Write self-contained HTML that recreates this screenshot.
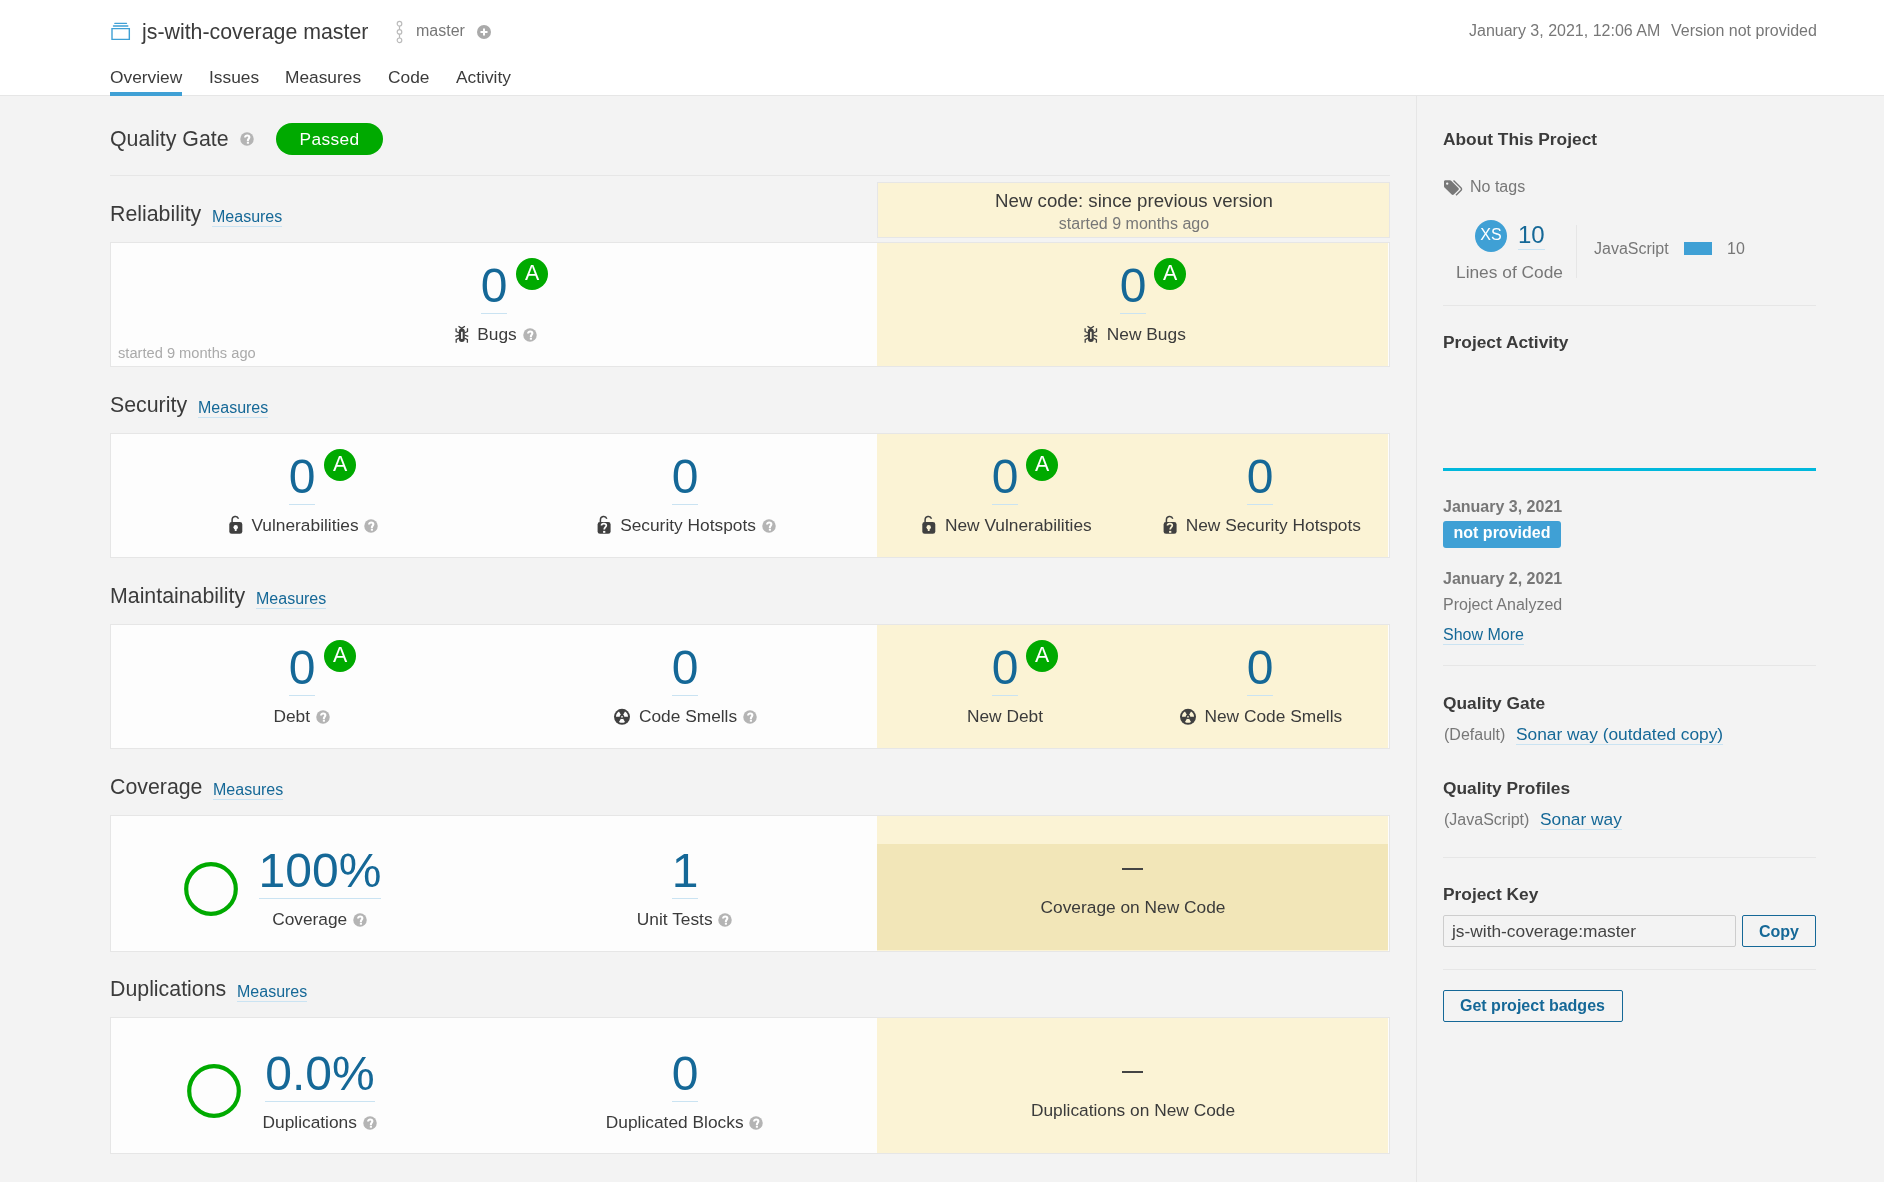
<!DOCTYPE html>
<html><head><meta charset="utf-8"><title>js-with-coverage master</title><style>
*{box-sizing:border-box;margin:0;padding:0}
html,body{width:1884px;height:1182px;overflow:hidden}
body{font-family:"Liberation Sans",sans-serif;background:#f3f3f3;color:#3b3b3b;position:relative}
.a{position:absolute;white-space:nowrap;line-height:1;will-change:transform}
.u{border-bottom:1px solid #cae3f2;padding-bottom:1px}
.rt{width:32px;height:32px;border-radius:50%;background:#00aa00;color:#fff;font-size:21.33px;line-height:30px;text-align:center}
</style></head><body>
<div class="a" style="left:0px;top:0px;width:1884px;height:95px;background:#fff"></div>
<div class="a" style="left:0px;top:95px;width:1884px;height:1px;background:#e6e6e6"></div>
<svg class="a" style="left:109.7px;top:19.8px" width="21.33" height="21.33" viewBox="0 0 16 16"><path d="M1.5 6.5h13v8h-13z" fill="none" stroke="#3fa0d5" stroke-width="1.05"/><path d="M2.6 4.5h10.8M3.6 2.5h8.8" stroke="#3fa0d5" stroke-width="1" stroke-linecap="round" fill="none"/></svg>
<div class="a" style="left:142px;top:22px;font-size:21.33px;color:#3b3b3b;font-weight:400;">js-with-coverage master</div>
<svg class="a" style="left:395px;top:20px" width="9" height="24" viewBox="0 0 9 24"><g fill="none" stroke="#bbb" stroke-width="1.2"><circle cx="4.5" cy="3.7" r="2.3"/><circle cx="4.5" cy="11.9" r="2.3"/><circle cx="4.5" cy="20.3" r="2.3"/><path d="M4.5 6v3.6M4.5 14.2v3.8"/></g></svg>
<div class="a" style="left:416px;top:23px;font-size:16px;color:#777;font-weight:400;">master</div>
<svg class="a" style="left:477px;top:25px" width="14" height="14" viewBox="0 0 14 14"><circle cx="7" cy="7" r="7" fill="#aaa"/><path d="M7 3.5v7M3.5 7h7" stroke="#fff" stroke-width="2"/></svg>
<div class="a" style="left:1468.5px;top:23.1px;font-size:16px;color:#777;font-weight:400;">January 3, 2021, 12:06 AM</div>
<div class="a" style="left:1670.5px;top:23.1px;font-size:16px;color:#777;font-weight:400;">Version not provided</div>
<div class="a" style="left:110px;top:69px;font-size:17.33px;color:#3b3b3b;font-weight:400;">Overview</div>
<div class="a" style="left:209px;top:69px;font-size:17.33px;color:#3b3b3b;font-weight:400;">Issues</div>
<div class="a" style="left:285px;top:69px;font-size:17.33px;color:#3b3b3b;font-weight:400;">Measures</div>
<div class="a" style="left:388px;top:69px;font-size:17.33px;color:#3b3b3b;font-weight:400;">Code</div>
<div class="a" style="left:456px;top:69px;font-size:17.33px;color:#3b3b3b;font-weight:400;">Activity</div>
<div class="a" style="left:110px;top:92px;width:72px;height:4px;background:#3fa0d5"></div>
<div class="a" style="left:1416px;top:96px;width:1px;height:1086px;background:#e6e6e6"></div>
<div class="a" style="left:110px;top:128.5px;font-size:21.33px;color:#3b3b3b;font-weight:400;">Quality Gate</div>
<div class="a" style="left:240px;top:132px;width:14px;height:14px"><svg width="14" height="14" viewBox="0 0 14 14" style="display:block"><circle cx="7" cy="7" r="6.75" fill="#b4b4b4"/><path d="M5.1 5.5C5.1 4.2 6 3.55 7.2 3.55 8.5 3.55 9.35 4.3 9.35 5.35 9.35 6.7 7.9 6.9 7.9 8.4V9.3" stroke="#fff" stroke-width="2.1" fill="none"/><rect x="6.85" y="9.9" width="2.1" height="1.8" fill="#fff"/></svg></div>
<div class="a" style="left:276px;top:123px;width:107px;height:32px;border-radius:16px;background:#00aa00;color:#fff;font-size:17.33px;line-height:32px;text-align:center;letter-spacing:0.35px">Passed</div>
<div class="a" style="left:110px;top:175px;width:1280px;height:1px;background:#e6e6e6"></div>
<div class="a" style="left:877px;top:182px;width:513px;height:56px;background:#fbf3d5;border:1px solid #e6e6e6"></div>
<div class="a" style="left:733.5999999999999px;width:800px;text-align:center;top:192px;font-size:18.67px;color:#3b3b3b;font-weight:400;">New code: since previous version</div>
<div class="a" style="left:733.7px;width:800px;text-align:center;top:215.7px;font-size:16px;color:#777;font-weight:400;">started 9 months ago</div>
<div class="a" style="left:110px;top:204px;font-size:21.33px;color:#3b3b3b;font-weight:400;">Reliability</div>
<div class="a" style="left:211.5px;top:208.65px;font-size:16px;color:#156897"><span class="u">Measures</span></div>
<div class="a" style="left:110px;top:242px;width:1280px;height:125px;background:#fdfdfd;border:1px solid #e6e6e6"></div>
<div class="a" style="left:877px;top:243px;width:511px;height:123px;background:#fbf3d5"></div>
<div class="a" style="left:118px;top:346px;font-size:14.67px;color:#aaa;font-weight:400;">started 9 months ago</div>
<div class="a" style="left:194px;width:600px;top:262px;text-align:center;font-size:48px;color:#156897"><span class="u">0</span></div>
<div class="a rt" style="left:516px;top:258px">A</div>
<div class="a" style="left:194px;width:600px;top:326px;height:17.33px;font-size:17.33px;color:#3b3b3b;display:flex;justify-content:center"><span style="display:inline-block;width:21.33px;height:17.33px;margin-right:5.33px;position:relative"><span style="position:absolute;left:0px;top:-2px"><svg width="21.33" height="21.33" viewBox="0 0 21.33 21.33" style="display:block"><mask id="mk1" maskUnits="userSpaceOnUse" x="0" y="0" width="21.33" height="21.33"><rect x="-2" y="-2" width="26" height="26" fill="#fff"/><rect x="10.05" y="7.8" width="1.6" height="7.1" fill="#000"/></mask><g mask="url(#mk1)"><g transform="translate(-1.5 0)"><g stroke="#404040" stroke-width="1.3" fill="none" stroke-linejoin="round"><path d="M9.0 2.2L12.2 4.4L15.4 2.2"/><path d="M9.8 9L6.6 7.5V4.2M14.8 9L18 7.5V4.2"/><path d="M9.6 11.1L5.8 12.3M15 11.1L18.8 12.3"/><path d="M9.8 14L6.7 15.6V18.8M14.8 14L17.9 15.6V18.8"/></g><rect x="9.4" y="4.5" width="5.9" height="13.4" rx="2.9" fill="#404040"/></g></g></svg></span></span><span>Bugs</span><span style="display:inline-block;width:14px;height:17.33px;margin-left:5.8px;margin-right:0.8px;position:relative"><span style="position:absolute;left:0;top:1.67px"><svg width="14" height="14" viewBox="0 0 14 14" style="display:block"><circle cx="7" cy="7" r="6.75" fill="#b4b4b4"/><path d="M5.1 5.5C5.1 4.2 6 3.55 7.2 3.55 8.5 3.55 9.35 4.3 9.35 5.35 9.35 6.7 7.9 6.9 7.9 8.4V9.3" stroke="#fff" stroke-width="2.1" fill="none"/><rect x="6.85" y="9.9" width="2.1" height="1.8" fill="#fff"/></svg></span></span></div>
<div class="a" style="left:833px;width:600px;top:262px;text-align:center;font-size:48px;color:#156897"><span class="u">0</span></div>
<div class="a rt" style="left:1154px;top:258px">A</div>
<div class="a" style="left:833px;width:600px;top:326px;height:17.33px;font-size:17.33px;color:#3b3b3b;display:flex;justify-content:center"><span style="display:inline-block;width:21.33px;height:17.33px;margin-right:5.33px;position:relative"><span style="position:absolute;left:0px;top:-2px"><svg width="21.33" height="21.33" viewBox="0 0 21.33 21.33" style="display:block"><mask id="mk2" maskUnits="userSpaceOnUse" x="0" y="0" width="21.33" height="21.33"><rect x="-2" y="-2" width="26" height="26" fill="#fff"/><rect x="10.05" y="7.8" width="1.6" height="7.1" fill="#000"/></mask><g mask="url(#mk2)"><g transform="translate(-1.5 0)"><g stroke="#404040" stroke-width="1.3" fill="none" stroke-linejoin="round"><path d="M9.0 2.2L12.2 4.4L15.4 2.2"/><path d="M9.8 9L6.6 7.5V4.2M14.8 9L18 7.5V4.2"/><path d="M9.6 11.1L5.8 12.3M15 11.1L18.8 12.3"/><path d="M9.8 14L6.7 15.6V18.8M14.8 14L17.9 15.6V18.8"/></g><rect x="9.4" y="4.5" width="5.9" height="13.4" rx="2.9" fill="#404040"/></g></g></svg></span></span><span>New Bugs</span></div>
<div class="a" style="left:110px;top:395px;font-size:21.33px;color:#3b3b3b;font-weight:400;">Security</div>
<div class="a" style="left:197.5px;top:399.65px;font-size:16px;color:#156897"><span class="u">Measures</span></div>
<div class="a" style="left:110px;top:433px;width:1280px;height:125px;background:#fdfdfd;border:1px solid #e6e6e6"></div>
<div class="a" style="left:877px;top:434px;width:511px;height:123px;background:#fbf3d5"></div>
<div class="a" style="left:2px;width:600px;top:453px;text-align:center;font-size:48px;color:#156897"><span class="u">0</span></div>
<div class="a rt" style="left:324px;top:449px">A</div>
<div class="a" style="left:2px;width:600px;top:517px;height:17.33px;font-size:17.33px;color:#3b3b3b;display:flex;justify-content:center"><span style="display:inline-block;width:21.33px;height:17.33px;margin-right:5.33px;position:relative"><span style="position:absolute;left:0px;top:-2px"><svg width="21.33" height="21.33" viewBox="0 0 21.33 21.33" style="display:block"><mask id="mk3" maskUnits="userSpaceOnUse" x="0" y="0" width="21.33" height="21.33"><rect x="-2" y="-2" width="26" height="26" fill="#fff"/><circle cx="10.70" cy="12.2" r="2.2" fill="#000"/><path d="M10.70 12.5V16" stroke="#000" stroke-width="1.8"/></mask><g mask="url(#mk3)"><path d="M7.10 7.6V4.85A3.3 3.3 0 0 1 13.50 3.72" stroke="#404040" stroke-width="1.5" fill="none"/><rect x="4.3" y="7.05" width="13" height="11.8" rx="2.4" fill="#404040"/></g></svg></span></span><span>Vulnerabilities</span><span style="display:inline-block;width:14px;height:17.33px;margin-left:5.8px;margin-right:0.8px;position:relative"><span style="position:absolute;left:0;top:1.67px"><svg width="14" height="14" viewBox="0 0 14 14" style="display:block"><circle cx="7" cy="7" r="6.75" fill="#b4b4b4"/><path d="M5.1 5.5C5.1 4.2 6 3.55 7.2 3.55 8.5 3.55 9.35 4.3 9.35 5.35 9.35 6.7 7.9 6.9 7.9 8.4V9.3" stroke="#fff" stroke-width="2.1" fill="none"/><rect x="6.85" y="9.9" width="2.1" height="1.8" fill="#fff"/></svg></span></span></div>
<div class="a" style="left:385px;width:600px;top:453px;text-align:center;font-size:48px;color:#156897"><span class="u">0</span></div>
<div class="a" style="left:385px;width:600px;top:517px;height:17.33px;font-size:17.33px;color:#3b3b3b;display:flex;justify-content:center"><span style="display:inline-block;width:21.33px;height:17.33px;margin-right:5.33px;position:relative"><span style="position:absolute;left:0px;top:-2px"><svg width="21.33" height="21.33" viewBox="0 0 21.33 21.33" style="display:block"><mask id="mk4" maskUnits="userSpaceOnUse" x="0" y="0" width="21.33" height="21.33"><rect x="-2" y="-2" width="26" height="26" fill="#fff"/><path d="M8.50 10.4C8.50 9.3 9.50 8.6 10.90 8.6 12.30 8.6 13.30 9.3 13.30 10.5 13.30 11.9 11.20 12.6 11.20 14.6" stroke="#000" stroke-width="1.7" fill="none"/><rect x="10.10" y="15.9" width="2.2" height="1.9" fill="#000"/></mask><g mask="url(#mk4)"><path d="M7.40 7.6V4.85A3.3 3.3 0 0 1 13.80 3.72" stroke="#404040" stroke-width="1.5" fill="none"/><rect x="4.6" y="7.05" width="13" height="11.8" rx="2.4" fill="#404040"/></g></svg></span></span><span>Security Hotspots</span><span style="display:inline-block;width:14px;height:17.33px;margin-left:5.8px;margin-right:0.8px;position:relative"><span style="position:absolute;left:0;top:1.67px"><svg width="14" height="14" viewBox="0 0 14 14" style="display:block"><circle cx="7" cy="7" r="6.75" fill="#b4b4b4"/><path d="M5.1 5.5C5.1 4.2 6 3.55 7.2 3.55 8.5 3.55 9.35 4.3 9.35 5.35 9.35 6.7 7.9 6.9 7.9 8.4V9.3" stroke="#fff" stroke-width="2.1" fill="none"/><rect x="6.85" y="9.9" width="2.1" height="1.8" fill="#fff"/></svg></span></span></div>
<div class="a" style="left:705px;width:600px;top:453px;text-align:center;font-size:48px;color:#156897"><span class="u">0</span></div>
<div class="a rt" style="left:1026px;top:449px">A</div>
<div class="a" style="left:705px;width:600px;top:517px;height:17.33px;font-size:17.33px;color:#3b3b3b;display:flex;justify-content:center"><span style="display:inline-block;width:21.33px;height:17.33px;margin-right:5.33px;position:relative"><span style="position:absolute;left:0px;top:-2px"><svg width="21.33" height="21.33" viewBox="0 0 21.33 21.33" style="display:block"><mask id="mk5" maskUnits="userSpaceOnUse" x="0" y="0" width="21.33" height="21.33"><rect x="-2" y="-2" width="26" height="26" fill="#fff"/><circle cx="10.70" cy="12.2" r="2.2" fill="#000"/><path d="M10.70 12.5V16" stroke="#000" stroke-width="1.8"/></mask><g mask="url(#mk5)"><path d="M7.10 7.6V4.85A3.3 3.3 0 0 1 13.50 3.72" stroke="#404040" stroke-width="1.5" fill="none"/><rect x="4.3" y="7.05" width="13" height="11.8" rx="2.4" fill="#404040"/></g></svg></span></span><span>New Vulnerabilities</span></div>
<div class="a" style="left:960px;width:600px;top:453px;text-align:center;font-size:48px;color:#156897"><span class="u">0</span></div>
<div class="a" style="left:960px;width:600px;top:517px;height:17.33px;font-size:17.33px;color:#3b3b3b;display:flex;justify-content:center"><span style="display:inline-block;width:21.33px;height:17.33px;margin-right:5.33px;position:relative"><span style="position:absolute;left:0px;top:-2px"><svg width="21.33" height="21.33" viewBox="0 0 21.33 21.33" style="display:block"><mask id="mk6" maskUnits="userSpaceOnUse" x="0" y="0" width="21.33" height="21.33"><rect x="-2" y="-2" width="26" height="26" fill="#fff"/><path d="M8.50 10.4C8.50 9.3 9.50 8.6 10.90 8.6 12.30 8.6 13.30 9.3 13.30 10.5 13.30 11.9 11.20 12.6 11.20 14.6" stroke="#000" stroke-width="1.7" fill="none"/><rect x="10.10" y="15.9" width="2.2" height="1.9" fill="#000"/></mask><g mask="url(#mk6)"><path d="M7.40 7.6V4.85A3.3 3.3 0 0 1 13.80 3.72" stroke="#404040" stroke-width="1.5" fill="none"/><rect x="4.6" y="7.05" width="13" height="11.8" rx="2.4" fill="#404040"/></g></svg></span></span><span>New Security Hotspots</span></div>
<div class="a" style="left:110px;top:586px;font-size:21.33px;color:#3b3b3b;font-weight:400;">Maintainability</div>
<div class="a" style="left:255.5px;top:590.65px;font-size:16px;color:#156897"><span class="u">Measures</span></div>
<div class="a" style="left:110px;top:624px;width:1280px;height:125px;background:#fdfdfd;border:1px solid #e6e6e6"></div>
<div class="a" style="left:877px;top:625px;width:511px;height:123px;background:#fbf3d5"></div>
<div class="a" style="left:2px;width:600px;top:644px;text-align:center;font-size:48px;color:#156897"><span class="u">0</span></div>
<div class="a rt" style="left:324px;top:640px">A</div>
<div class="a" style="left:2px;width:600px;top:708px;height:17.33px;font-size:17.33px;color:#3b3b3b;display:flex;justify-content:center"><span>Debt</span><span style="display:inline-block;width:14px;height:17.33px;margin-left:5.8px;margin-right:0.8px;position:relative"><span style="position:absolute;left:0;top:1.67px"><svg width="14" height="14" viewBox="0 0 14 14" style="display:block"><circle cx="7" cy="7" r="6.75" fill="#b4b4b4"/><path d="M5.1 5.5C5.1 4.2 6 3.55 7.2 3.55 8.5 3.55 9.35 4.3 9.35 5.35 9.35 6.7 7.9 6.9 7.9 8.4V9.3" stroke="#fff" stroke-width="2.1" fill="none"/><rect x="6.85" y="9.9" width="2.1" height="1.8" fill="#fff"/></svg></span></span></div>
<div class="a" style="left:385px;width:600px;top:644px;text-align:center;font-size:48px;color:#156897"><span class="u">0</span></div>
<div class="a" style="left:385px;width:600px;top:708px;height:17.33px;font-size:17.33px;color:#3b3b3b;display:flex;justify-content:center"><span style="display:inline-block;width:21.33px;height:17.33px;margin-right:5.33px;position:relative"><span style="position:absolute;left:0px;top:-2px"><svg width="21.33" height="21.33" viewBox="0 0 21.33 21.33" style="display:block"><mask id="mk7" maskUnits="userSpaceOnUse" x="0" y="0" width="21.33" height="21.33"><rect x="-2" y="-2" width="26" height="26" fill="#fff"/><path d="M7.70 10.80L4.00 10.80A6.0 6.0 0 0 1 7.00 5.60L8.85 8.81A2.3 2.3 0 0 0 7.70 10.80ZM11.15 8.81L13.00 5.60A6.0 6.0 0 0 1 16.00 10.80L12.30 10.80A2.3 2.3 0 0 0 11.15 8.81ZM11.15 12.79L13.00 16.00A6.0 6.0 0 0 1 7.00 16.00L8.85 12.79A2.3 2.3 0 0 0 11.15 12.79Z" fill="#000"/><circle cx="10.0" cy="10.8" r="0.85" fill="#000"/></mask><g mask="url(#mk7)"><circle cx="10.0" cy="10.8" r="8" fill="#404040"/></g></svg></span></span><span>Code Smells</span><span style="display:inline-block;width:14px;height:17.33px;margin-left:5.8px;margin-right:0.8px;position:relative"><span style="position:absolute;left:0;top:1.67px"><svg width="14" height="14" viewBox="0 0 14 14" style="display:block"><circle cx="7" cy="7" r="6.75" fill="#b4b4b4"/><path d="M5.1 5.5C5.1 4.2 6 3.55 7.2 3.55 8.5 3.55 9.35 4.3 9.35 5.35 9.35 6.7 7.9 6.9 7.9 8.4V9.3" stroke="#fff" stroke-width="2.1" fill="none"/><rect x="6.85" y="9.9" width="2.1" height="1.8" fill="#fff"/></svg></span></span></div>
<div class="a" style="left:705px;width:600px;top:644px;text-align:center;font-size:48px;color:#156897"><span class="u">0</span></div>
<div class="a rt" style="left:1026px;top:640px">A</div>
<div class="a" style="left:705px;width:600px;top:708px;height:17.33px;font-size:17.33px;color:#3b3b3b;display:flex;justify-content:center"><span>New Debt</span></div>
<div class="a" style="left:960px;width:600px;top:644px;text-align:center;font-size:48px;color:#156897"><span class="u">0</span></div>
<div class="a" style="left:960px;width:600px;top:708px;height:17.33px;font-size:17.33px;color:#3b3b3b;display:flex;justify-content:center"><span style="display:inline-block;width:21.33px;height:17.33px;margin-right:5.33px;position:relative"><span style="position:absolute;left:0px;top:-2px"><svg width="21.33" height="21.33" viewBox="0 0 21.33 21.33" style="display:block"><mask id="mk8" maskUnits="userSpaceOnUse" x="0" y="0" width="21.33" height="21.33"><rect x="-2" y="-2" width="26" height="26" fill="#fff"/><path d="M7.70 10.80L4.00 10.80A6.0 6.0 0 0 1 7.00 5.60L8.85 8.81A2.3 2.3 0 0 0 7.70 10.80ZM11.15 8.81L13.00 5.60A6.0 6.0 0 0 1 16.00 10.80L12.30 10.80A2.3 2.3 0 0 0 11.15 8.81ZM11.15 12.79L13.00 16.00A6.0 6.0 0 0 1 7.00 16.00L8.85 12.79A2.3 2.3 0 0 0 11.15 12.79Z" fill="#000"/><circle cx="10.0" cy="10.8" r="0.85" fill="#000"/></mask><g mask="url(#mk8)"><circle cx="10.0" cy="10.8" r="8" fill="#404040"/></g></svg></span></span><span>New Code Smells</span></div>
<div class="a" style="left:110px;top:777px;font-size:21.33px;color:#3b3b3b;font-weight:400;">Coverage</div>
<div class="a" style="left:212.5px;top:781.65px;font-size:16px;color:#156897"><span class="u">Measures</span></div>
<div class="a" style="left:110px;top:815px;width:1280px;height:137px;background:#fdfdfd;border:1px solid #e6e6e6"></div>
<div class="a" style="left:877px;top:816px;width:511px;height:135px;background:#fbf3d5"></div>
<div class="a" style="left:877px;top:844px;width:511px;height:106px;background:#f2e6b8"></div>
<svg class="a" style="left:183.5px;top:861.9px" width="54" height="54" viewBox="0 0 54 54"><circle cx="27" cy="27" r="24.8" fill="none" stroke="#00aa00" stroke-width="4.2"/></svg>
<div class="a" style="left:20px;width:600px;top:847.3px;text-align:center;font-size:48px;color:#156897"><span class="u">100%</span></div>
<div class="a" style="left:20px;width:600px;top:911px;height:17.33px;font-size:17.33px;color:#3b3b3b;display:flex;justify-content:center"><span>Coverage</span><span style="display:inline-block;width:14px;height:17.33px;margin-left:5.8px;margin-right:0.8px;position:relative"><span style="position:absolute;left:0;top:1.67px"><svg width="14" height="14" viewBox="0 0 14 14" style="display:block"><circle cx="7" cy="7" r="6.75" fill="#b4b4b4"/><path d="M5.1 5.5C5.1 4.2 6 3.55 7.2 3.55 8.5 3.55 9.35 4.3 9.35 5.35 9.35 6.7 7.9 6.9 7.9 8.4V9.3" stroke="#fff" stroke-width="2.1" fill="none"/><rect x="6.85" y="9.9" width="2.1" height="1.8" fill="#fff"/></svg></span></span></div>
<div class="a" style="left:385px;width:600px;top:847.3px;text-align:center;font-size:48px;color:#156897"><span class="u">1</span></div>
<div class="a" style="left:385px;width:600px;top:911px;height:17.33px;font-size:17.33px;color:#3b3b3b;display:flex;justify-content:center"><span>Unit Tests</span><span style="display:inline-block;width:14px;height:17.33px;margin-left:5.8px;margin-right:0.8px;position:relative"><span style="position:absolute;left:0;top:1.67px"><svg width="14" height="14" viewBox="0 0 14 14" style="display:block"><circle cx="7" cy="7" r="6.75" fill="#b4b4b4"/><path d="M5.1 5.5C5.1 4.2 6 3.55 7.2 3.55 8.5 3.55 9.35 4.3 9.35 5.35 9.35 6.7 7.9 6.9 7.9 8.4V9.3" stroke="#fff" stroke-width="2.1" fill="none"/><rect x="6.85" y="9.9" width="2.1" height="1.8" fill="#fff"/></svg></span></span></div>
<div class="a" style="left:1122px;top:868px;width:21px;height:2px;background:#444"></div>
<div class="a" style="left:733px;width:800px;text-align:center;top:899px;font-size:17.33px;color:#3b3b3b;font-weight:400;">Coverage on New Code</div>
<div class="a" style="left:110px;top:979px;font-size:21.33px;color:#3b3b3b;font-weight:400;">Duplications</div>
<div class="a" style="left:236.5px;top:983.65px;font-size:16px;color:#156897"><span class="u">Measures</span></div>
<div class="a" style="left:110px;top:1017px;width:1280px;height:137px;background:#fdfdfd;border:1px solid #e6e6e6"></div>
<div class="a" style="left:877px;top:1018px;width:511px;height:135px;background:#fbf3d5"></div>
<svg class="a" style="left:187px;top:1064.3px" width="54" height="54" viewBox="0 0 54 54"><circle cx="27" cy="27" r="24.8" fill="none" stroke="#00aa00" stroke-width="4.2"/></svg>
<div class="a" style="left:20px;width:600px;top:1050px;text-align:center;font-size:48px;color:#156897"><span class="u">0.0%</span></div>
<div class="a" style="left:20px;width:600px;top:1114px;height:17.33px;font-size:17.33px;color:#3b3b3b;display:flex;justify-content:center"><span>Duplications</span><span style="display:inline-block;width:14px;height:17.33px;margin-left:5.8px;margin-right:0.8px;position:relative"><span style="position:absolute;left:0;top:1.67px"><svg width="14" height="14" viewBox="0 0 14 14" style="display:block"><circle cx="7" cy="7" r="6.75" fill="#b4b4b4"/><path d="M5.1 5.5C5.1 4.2 6 3.55 7.2 3.55 8.5 3.55 9.35 4.3 9.35 5.35 9.35 6.7 7.9 6.9 7.9 8.4V9.3" stroke="#fff" stroke-width="2.1" fill="none"/><rect x="6.85" y="9.9" width="2.1" height="1.8" fill="#fff"/></svg></span></span></div>
<div class="a" style="left:385px;width:600px;top:1050px;text-align:center;font-size:48px;color:#156897"><span class="u">0</span></div>
<div class="a" style="left:385px;width:600px;top:1114px;height:17.33px;font-size:17.33px;color:#3b3b3b;display:flex;justify-content:center"><span>Duplicated Blocks</span><span style="display:inline-block;width:14px;height:17.33px;margin-left:5.8px;margin-right:0.8px;position:relative"><span style="position:absolute;left:0;top:1.67px"><svg width="14" height="14" viewBox="0 0 14 14" style="display:block"><circle cx="7" cy="7" r="6.75" fill="#b4b4b4"/><path d="M5.1 5.5C5.1 4.2 6 3.55 7.2 3.55 8.5 3.55 9.35 4.3 9.35 5.35 9.35 6.7 7.9 6.9 7.9 8.4V9.3" stroke="#fff" stroke-width="2.1" fill="none"/><rect x="6.85" y="9.9" width="2.1" height="1.8" fill="#fff"/></svg></span></span></div>
<div class="a" style="left:1122px;top:1071px;width:21px;height:2px;background:#444"></div>
<div class="a" style="left:733px;width:800px;text-align:center;top:1102px;font-size:17.33px;color:#3b3b3b;font-weight:400;">Duplications on New Code</div>
<div class="a" style="left:1443px;top:131px;font-size:17.33px;color:#3b3b3b;font-weight:700;">About This Project</div>
<svg class="a" style="left:1444px;top:180px" width="20" height="17" viewBox="0 0 20 17"><path d="M0 1.5V6.2c0 .5.2.9.5 1.2l7.2 7.2c.6.6 1.5.6 2.1 0l4.6-4.6c.6-.6.6-1.5 0-2.1L7.2.7C6.9.4 6.5.2 6 .2H1.4C.6.2 0 .8 0 1.5zM3.2 2.4a1.2 1.2 0 1 1 0 2.4 1.2 1.2 0 0 1 0-2.4z" fill="#777"/><path d="M9.5.5l7.6 7.6c.6.6.6 1.5 0 2.1l-5.1 5.1" stroke="#777" stroke-width="1.4" fill="none"/></svg>
<div class="a" style="left:1470px;top:179px;font-size:16px;color:#777;font-weight:400;">No tags</div>
<div class="a rt" style="left:1475px;top:220px;background:#3fa0d5;font-size:16px">XS</div>
<div class="a" style="left:1517.5px;top:223px;font-size:24px;color:#156897"><span class="u">10</span></div>
<div class="a" style="left:1456px;top:264px;font-size:17.33px;color:#777;font-weight:400;">Lines of Code</div>
<div class="a" style="left:1576px;top:225px;width:1px;height:53px;background:#e6e6e6"></div>
<div class="a" style="left:1594px;top:241px;font-size:16px;color:#777;font-weight:400;">JavaScript</div>
<div class="a" style="left:1684.4px;top:242px;width:28px;height:13px;background:#3fa0d5"></div>
<div class="a" style="left:1727px;top:241px;font-size:16px;color:#777;font-weight:400;">10</div>
<div class="a" style="left:1443px;top:305px;width:373px;height:1px;background:#e6e6e6"></div>
<div class="a" style="left:1443px;top:334px;font-size:17.33px;color:#3b3b3b;font-weight:700;">Project Activity</div>
<div class="a" style="left:1443px;top:468px;width:373px;height:3px;background:#00b8dc"></div>
<div class="a" style="left:1443px;top:498.7px;font-size:16px;color:#777;font-weight:700;">January 3, 2021</div>
<div class="a" style="left:1443px;top:521px;width:118px;height:27px;border-radius:3px;background:#3fa0d5;color:#fff;font-weight:700;font-size:16px;line-height:24px;text-align:center">not provided</div>
<div class="a" style="left:1443px;top:570.7px;font-size:16px;color:#777;font-weight:700;">January 2, 2021</div>
<div class="a" style="left:1443px;top:596.5px;font-size:16px;color:#777;font-weight:400;">Project Analyzed</div>
<div class="a" style="left:1443px;top:626.7px;font-size:16px;color:#156897"><span class="u">Show More</span></div>
<div class="a" style="left:1443px;top:665px;width:373px;height:1px;background:#e6e6e6"></div>
<div class="a" style="left:1443px;top:695px;font-size:17.33px;color:#3b3b3b;font-weight:700;">Quality Gate</div>
<div class="a" style="left:1444px;top:727px;font-size:16px;color:#777;font-weight:400;">(Default)</div>
<div class="a" style="left:1516px;top:726px;font-size:17.33px;color:#156897"><span class="u" style="padding-bottom:0">Sonar way (outdated copy)</span></div>
<div class="a" style="left:1443px;top:780px;font-size:17.33px;color:#3b3b3b;font-weight:700;">Quality Profiles</div>
<div class="a" style="left:1444px;top:812px;font-size:16px;color:#777;font-weight:400;">(JavaScript)</div>
<div class="a" style="left:1540px;top:811px;font-size:17.33px;color:#156897"><span class="u" style="padding-bottom:0">Sonar way</span></div>
<div class="a" style="left:1443px;top:857px;width:373px;height:1px;background:#e6e6e6"></div>
<div class="a" style="left:1443px;top:886px;font-size:17.33px;color:#3b3b3b;font-weight:700;">Project Key</div>
<div class="a" style="left:1443px;top:915px;width:293px;height:32px;border:1px solid #cdcdcd;border-radius:2px;background:#f3f3f3"></div>
<div class="a" style="left:1452px;top:923px;font-size:17.33px;color:#444;font-weight:400;">js-with-coverage:master</div>
<div class="a" style="left:1742px;top:915px;width:74px;height:32px;border:1px solid #156897;border-radius:2px"></div>
<div class="a" style="left:1759px;top:924px;font-size:16px;color:#156897;font-weight:700;">Copy</div>
<div class="a" style="left:1443px;top:969px;width:373px;height:1px;background:#e6e6e6"></div>
<div class="a" style="left:1443px;top:990px;width:180px;height:32px;border:1px solid #156897;border-radius:2px"></div>
<div class="a" style="left:1460.4px;top:998px;font-size:16px;color:#156897;font-weight:700;">Get project badges</div>
</body></html>
